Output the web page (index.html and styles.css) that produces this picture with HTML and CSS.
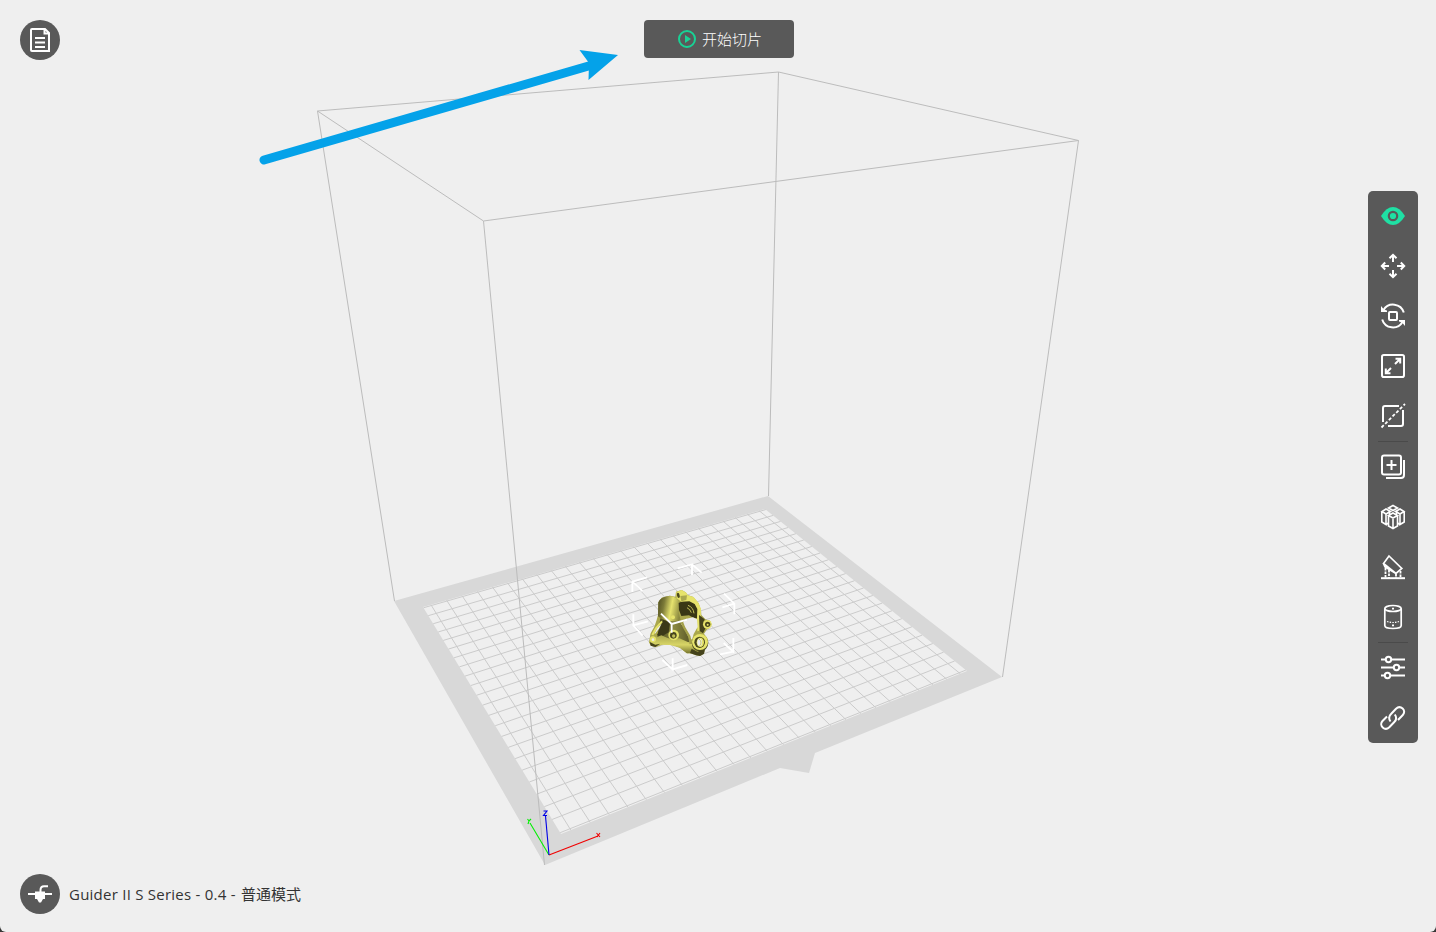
FILE: index.html
```html
<!DOCTYPE html>
<html lang="zh-CN">
<head>
<meta charset="utf-8">
<title>Guider II S Series</title>
<link rel="stylesheet" href="styles.css">
</head>
<body>
<main class="window">
  <svg class="scene" viewBox="0 0 1436 932">
    <defs>
      <linearGradient id="head" x1="0" y1="0" x2="1" y2="0.25">
        <stop offset="0" stop-color="#4c4a20"/><stop offset=".3" stop-color="#7c7a38"/><stop offset=".62" stop-color="#e6e36e"/><stop offset="1" stop-color="#8a883f"/>
      </linearGradient>
      <linearGradient id="leg" x1="0" y1="0" x2="1" y2="0">
        <stop offset="0" stop-color="#45431c"/><stop offset=".5" stop-color="#8b8941"/><stop offset="1" stop-color="#5a5828"/>
      </linearGradient>
      <linearGradient id="base" x1="0" y1="0" x2="0" y2="1">
        <stop offset="0" stop-color="#a6a44d"/><stop offset=".55" stop-color="#d8d566"/><stop offset="1" stop-color="#77752f"/>
      </linearGradient>
    </defs>
    <path class="bed" fill-rule="evenodd" d="M394 601L768 496L1002 677L815 753L809 773L780 768L545 865ZM423 607L561 834L967 671L765 509Z"/>
    <g id="grid" class="grid"></g>
    <path class="volume" d="M317.500 111L778.500 72L1078.500 140.500L483.500 221ZM317.500 111L394.500 601M778.500 72L768.500 496M1078.500 140.500L1002.500 677M483.500 221L544.500 865"/>

    <g transform="translate(620 555) scale(.33333)">
      <path class="model-mid" d="M115 142L125 128L150 122L166 125L168 110L185 105L197 112L203 120L220 126L236 145L243 165L244 180L256 193L270 197L275 208L269 219L260 224L252 236L262 250L263 268L254 285L252 296L240 303L228 301L215 296L200 295L180 278L160 270L130 268L108 276L93 272L87 262L92 235L103 215L110 195L114 180Z"/>
      <path fill="url(#head)" d="M115 142Q122 124 150 122L168 128L180 142L176 172L185 207L170 214L130 196L114 184Z"/>
      <path fill="url(#leg)" d="M121 190L145 199L172 198L190 214L212 262L190 261L158 250L128 252L112 248Z"/>
      <path fill="#3b3918" d="M130 194L150 203L146 232L126 244L111 241Z"/>
      <path fill="url(#base)" d="M92 238L106 248L124 241L150 252L178 250L205 262L217 258L228 292L201 295L179 278L150 270L123 269L104 276L88 265Z"/>
      <path fill="#393715" d="M176 144L190 137L212 137L226 147L235 163L232 190L220 188L207 181L184 183L177 165Z"/>
      <path class="model-light" d="M169 111L185 105L199 113L203 121L221 126L236 145L243 163L242 200L247 225L232 229L231 190L232 162L224 147L208 139L184 140L170 130Z"/>
      <path fill="#aaa84e" d="M181 123L201 121L199 135L184 139Z"/>
      <ellipse class="model-hole" cx="175" cy="121" rx="4" ry="8" transform="rotate(-15 175 121)"/>
      <path class="model-slot" d="M204 151Q220 157 222 175M201 158Q211 163 214 173"/>
      <path class="opening" d="M184 207L199 191L219 187L231 193L233 216L221 237L216 254L205 244L196 225Z"/>
      <path class="opening" d="M104 234L111 220L125 205L118 220L104 238Z"/>
      <path class="model-edge" d="M97 240L108 220L126 199"/>
      <path class="model-ridge" d="M184 196L192 217L208 244L212 267"/>
      <path fill="#45431c" d="M237 180L254 193L250 203L257 219L249 235L239 228ZM215 281L232 290L255 282L252 296L240 303L228 301L210 294ZM89 261L106 269L121 266L106 276L92 272Z"/>
      <circle class="model-light" cx="262" cy="208" r="13"/>
      <circle class="model-hole" cx="263" cy="208" r="8"/>
      <circle class="model-light" cx="263" cy="209" r="3"/>
      <circle fill="#4b491f" cx="240" cy="264" r="25"/>
      <circle class="model-light" cx="240" cy="261" r="24"/>
      <ellipse class="model-hole" cx="239" cy="262" rx="16" ry="17"/>
      <ellipse class="model-light" cx="241" cy="262" rx="11" ry="14"/>
      <ellipse class="opening" cx="239" cy="262" rx="7" ry="11"/>
      <path class="model-slot" d="M237 252Q248 261 239 272"/>
      <circle class="model-light" cx="161" cy="240" r="16"/>
      <circle class="model-hole" cx="160" cy="241" r="10"/>
      <circle fill="#c1be5a" cx="161" cy="243" r="5"/>
      <circle class="model-light" cx="99" cy="253" r="9"/>
      <circle class="opening" cx="99" cy="254" r="4"/>
      <circle class="model-light" cx="159" cy="187" r="6"/>
      <path class="handles" d="M123 176L155 207L155 233M155 207L201 194M81 67L37 80L37 111M37 80L67 108M173 40L216 28L216 60M216 28L245 53M312 116L343 146L343 178M343 146L307 157M40 178L40 211L68 242M40 211L84 199M127 315L158 343L158 310M158 343L202 330M311 264L340 290L340 249M340 290L300 298"/>
    </g>

    <g class="axes">
      <path stroke="#00f000" d="M549 855L530 823"/><path stroke="#f00000" d="M549 855L598 836"/><path stroke="#0000e6" d="M549 855L545.500 816"/>
      <path stroke="#00f000" d="M527.500 819L529 821L531 819M529 821L528 824"/>
      <path stroke="#f00000" d="M596.500 833L600 837M600 833L597 837"/>
      <path stroke="#0000e6" d="M543.500 811H547L543.500 815.500H547"/>
    </g>
    <path class="pointer-line" d="M264 160L592 65"/>
    <path class="pointer-head" d="M618 55L579.500 50L589 63L588.500 80Z"/>
  </svg>

  <button class="round file" aria-label="File">
    <svg width="40" height="40" viewBox="0 0 40 40" class="line"><path d="M12 9H25L29 13V31H12Q11 31 11 30V10Q11 9 12 9ZM24.500 9.500V13.500H29M15 18H25M15 22.500H25M15 27H25"/></svg>
  </button>

  <button class="slice">
    <svg width="18" height="18" viewBox="0 0 18 18"><circle class="play-ring" cx="9" cy="9" r="8"/><path class="play" d="M7 5L13 9L7 13Z"/></svg>
    <span>开始切片</span>
  </button>

  <nav class="toolbar">
    <button class="tool"><svg viewBox="-13 -13 26 26"><path class="eye" d="M-12 0Q-6.500 -9 0 -9T12 0Q6.500 9 0 9T-12 0Z"/><circle class="iris" r="4.200"/></svg></button>
    <button class="tool"><svg class="line" viewBox="-13 -13 26 26"><path d="M0 -4V-11M-3.500 -7.800L0 -11.200L3.500 -7.800M0 4V11M-3.500 7.800L0 11.200L3.500 7.800M-4 0H-11M-7.800 -3.500L-11.200 0L-7.800 3.500M4 0H11M7.800 -3.500L11.200 0L7.800 3.500"/></svg></button>
    <button class="tool"><svg class="line" viewBox="-13 -13 26 26"><rect x="-4" y="-4" width="8" height="8" rx="1"/><path d="M-9.500 -6A11.200 11.200 0 0 1 10.800 -3.500M-10.800 3.500A11.200 11.200 0 0 0 9.500 6"/><path class="solid" d="M-12 -10V-4H-6V-5.500L-9 -6.500ZM12 10V4H6V5.500L9 6.500Z"/></svg></button>
    <button class="tool"><svg class="line" viewBox="-13 -13 26 26"><rect x="-11" y="-11" width="22" height="22" rx="1.800"/><path d="M2 -2L7 -7M2.500 -7.200H7.200V-2.500M-2 2L-7 7M-2.500 7.200H-7.200V2.500"/></svg></button>
    <button class="tool"><svg class="line" viewBox="-13 -13 26 26"><path d="M6 -10H-8Q-10 -10 -10 -8V6M10 -6V8Q10 10 8 10H-5"/><path class="dashes" d="M-11.500 11.500L12 -12"/></svg></button>
    <hr class="divider">
    <button class="tool"><svg class="line" viewBox="-13 -13 26 26"><rect x="-11" y="-11.500" width="19" height="19" rx="2"/><path d="M-1.500 -7V3M-6.500 -2H3.500M11 -7V8Q11 11 8 11H-7"/></svg></button>
    <button class="tool"><svg class="line thin" viewBox="-13 -13 26 26"><path d="M0 -11.500L4.500 -9L0 -6.500L-4.500 -9ZM-7 -8L-2.500 -5.500L-7 -3L-11 -5.500ZM7 -8L11 -5.500L7 -3L2.500 -5.500ZM0 -4L4.500 -1.500L0 1L-4.500 -1.500ZM-11.200 -5.500V5L-7 7.500V-3M11.200 -5.500V5L7 7.500V-3M-4.500 -1.500V9L0 11.500L4.500 9V-1.500M0 1V11.500M-7 -3L-3.500 -5V-2M7 -3L3.500 -5V-2M-7 7.500L-4.500 6M7 7.500L4.500 6"/></svg></button>
    <button class="tool"><svg class="line" viewBox="-13 -13 26 26"><path d="M-12 11.200H12"/><path class="mid" d="M-4 -11L8.800 1.500L3 6.500L-9.500 -3.500ZM-9.500 -3.500L-8 0L3 6.500"/><path class="posts" d="M-7.500 1V11M-4 3V11M3 7V11M7.500 4V11"/></svg></button>
    <button class="tool"><svg class="line mid" viewBox="-13 -13 26 26"><ellipse cx="0" cy="-8.500" rx="8.200" ry="3"/><path d="M-8.200 -8.500V8.500C-8.200 12.500 8.200 12.500 8.200 8.500V-8.500"/><path class="dots" d="M-6 4.500Q0 6.500 6 4.500"/><path class="solid" d="M-1 -9.200H1V-7.500H-1ZM-1 7.500H1V9.200H-1Z"/></svg></button>
    <hr class="divider">
    <button class="tool"><svg class="line" viewBox="-13 -13 26 26"><path d="M-12 -8.500H-7.500M-1.500 -8.500H12M-12 -.5H.5M6.500 -.5H12M-12 7.500H-8.500M-2.500 7.500H12"/><circle cx="-4.500" cy="-8.500" r="2.700"/><circle cx="3.500" cy="-.5" r="2.700"/><circle cx="-5.500" cy="7.500" r="2.700"/></svg></button>
    <button class="tool"><svg class="line" viewBox="-13 -13 26 26"><path d="M-2.500 3.500C-5 0 -4 -2 -2 -4L3 -9.300C7.500 -13.500 14 -7.500 9.800 -3L5 2M1.800 -3.500C4.300 0 3.300 2 1.300 4L-3.700 9.300C-8.200 13.500 -14.500 7.500 -10.500 3L-6 -1.500"/></svg></button>
  </nav>

  <footer class="machine">
    <div class="round">
      <svg width="40" height="40" viewBox="0 0 40 40"><path fill="#fff" d="M8 19H15V17.500H25V19H32V21H25V25H23L21 28.500H19L17 25H15V21H8Z"/><path class="tube" d="M20.500 18V16Q20.500 12.300 24 12.300H28"/></svg>
    </div>
    <span class="profile"><span class="latin">Guider II S Series - 0.4 - </span>普通模式</span>
  </footer>
</main>
<script src="grid.js"></script>
</body>
</html>
```
FILE: styles.css
```css
body { margin: 0; background: #373737; }
button { border: 0; padding: 0; color: inherit; font: inherit; }
.window {
  position: relative;
  box-sizing: border-box;
  width: 1436px;
  height: 932px;
  padding: 20px 18px 18px 20px;
  display: grid;
  grid-template-columns: 1fr auto 1fr;
  grid-template-rows: 40px 1fr 40px;
  background: #efefef;
  border-radius: 0 0 6px 6px;
  overflow: hidden;
  font: 15px/20px "Open Sans", "Noto Sans CJK SC", sans-serif;
  color: #333;
}
.scene { position: absolute; left: 0; top: 0; width: 1436px; height: 932px; }
.bed { fill: #d8d8d8; }
.grid { fill: none; stroke: #cbcbcb; stroke-width: 1; }
.volume { fill: none; stroke: #bcbcbc; stroke-width: 1; }
.model-mid { fill: #aaa74c; }
.model-light { fill: #e6e36b; }
.model-hole { fill: #49471e; }
.model-slot { fill: none; stroke: #c5c25a; stroke-width: 3; }
.model-edge { fill: none; stroke: #e6e36b; stroke-width: 6; }
.model-ridge { fill: none; stroke: #a4a14b; stroke-width: 7; }
.opening { fill: #ececec; }
.handles { fill: none; stroke: #fff; stroke-width: 5.5; }
.axes { fill: none; stroke-width: 1.1; }
.pointer-line { stroke: #04a2e9; stroke-width: 9; stroke-linecap: round; }
.pointer-head { fill: #04a2e9; }

.round {
  position: relative;
  width: 40px;
  height: 40px;
  border-radius: 50%;
  background: #595959;
}
.round svg { display: block; }
.line { fill: none; stroke: #fff; stroke-width: 2; }
.line.thin { stroke-width: 1.6; }
.mid { stroke-width: 1.7; }
.solid { fill: #fff; stroke: none; }
.dashes { stroke-dasharray: 3.2 2; stroke-width: 1.8; }
.posts { stroke-dasharray: 2.5 1; stroke-width: 1.8; }
.dots { stroke-dasharray: 1.5 1.2; stroke-width: 1.2; }
.tube { fill: none; stroke: #fff; stroke-width: 2; }

.slice {
  position: relative;
  grid-column: 2;
  box-sizing: border-box;
  width: 150px;
  height: 38px;
  padding-left: 2px;
  display: flex;
  align-items: center;
  justify-content: center;
  gap: 6px;
  border-radius: 4px;
  background: #595959;
  color: #fff;
}
.slice span { font-weight: 300; }
.play-ring { fill: none; stroke: #18d295; stroke-width: 2; }
.play { fill: #18d295; }

.toolbar {
  position: relative;
  grid-column: 3;
  grid-row: 2;
  justify-self: end;
  align-self: center;
  width: 50px;
  display: flex;
  flex-direction: column;
  border-radius: 5px;
  background: #595959;
}
.tool { height: 50px; display: grid; place-items: center; background: none; }
.tool svg { width: 26px; height: 26px; }
.divider { width: 30px; height: 1px; margin: 0 auto; border: 0; background: #4a4a4a; }
.eye { fill: #1fe0a4; }
.iris { fill: #1fe0a4; stroke: #595959; stroke-width: 2.2; }

.machine {
  position: relative;
  grid-column: 1 / 3;
  grid-row: 3;
  display: flex;
  align-items: center;
  gap: 9px;
}
.profile { display: flex; white-space: pre; }
.latin { width: 172px; letter-spacing: .24px; }
```
FILE: grid.js
```js
// Project the print bed's 10 mm grid onto the perspective quad.
const front = [561, 834], right = [967, 671], back = [765, 509], left = [423, 607];
const columns = 25, rows = 22.2;

const dx1 = right[0] - back[0], dx2 = left[0] - back[0];
const dy1 = right[1] - back[1], dy2 = left[1] - back[1];
const sx = front[0] - right[0] + back[0] - left[0];
const sy = front[1] - right[1] + back[1] - left[1];
const det = dx1 * dy2 - dx2 * dy1;
const g = (sx * dy2 - dx2 * sy) / det;
const h = (dx1 * sy - sx * dy1) / det;

function project(column, row) {
  const u = column / columns, v = row / rows, w = g * u + h * v + 1;
  const x = ((right[0] - front[0] + g * right[0]) * u + (left[0] - front[0] + h * left[0]) * v + front[0]) / w;
  const y = ((right[1] - front[1] + g * right[1]) * u + (left[1] - front[1] + h * left[1]) * v + front[1]) / w;
  return x.toFixed(2) + " " + y.toFixed(2);
}

let d = "";
for (let c = 0.5; c < columns; c++) d += "M" + project(c, 0) + "L" + project(c, rows);
for (let r = 0.1; r < rows; r++) d += "M" + project(0, r) + "L" + project(columns, r);

const path = document.createElementNS("http://www.w3.org/2000/svg", "path");
path.setAttribute("d", d);
document.getElementById("grid").appendChild(path);
```
